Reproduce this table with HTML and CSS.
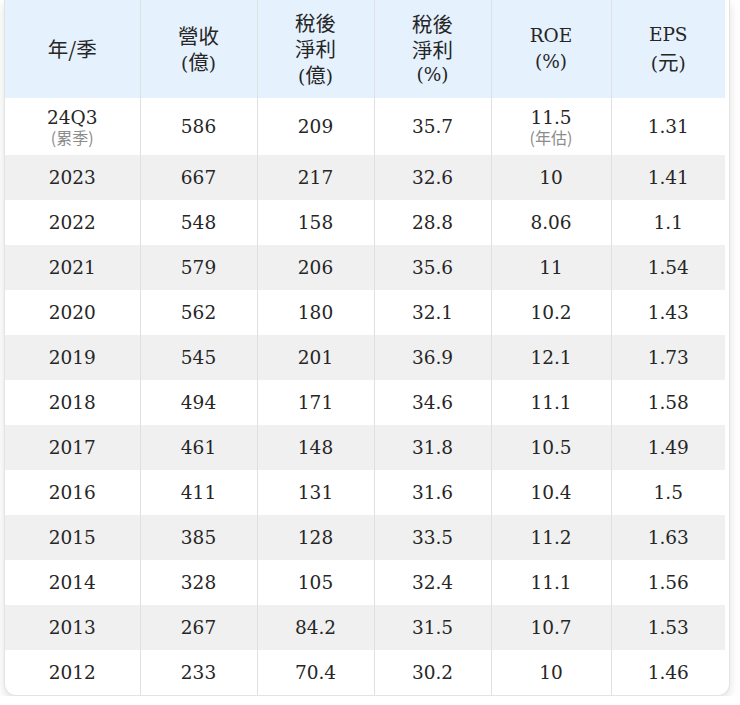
FILE: index.html
```html
<!DOCTYPE html>
<html lang="zh-Hant">
<head>
<meta charset="utf-8">
<title>歷年財務</title>
<link rel="stylesheet" href="styles.css">
</head>
<body>
<div class="card">
  <table class="fin">
    <colgroup>
      <col class="c-year"><col class="c-mid"><col class="c-mid"><col class="c-mid"><col class="c-roe"><col class="c-eps">
    </colgroup>
    <thead>
      <tr>
        <th><span class="zh">年/季</span></th>
        <th><div class="zh">營收</div><div>(<span class="zh">億</span>)</div></th>
        <th><div class="zh">稅後</div><div class="zh">淨利</div><div>(<span class="zh">億</span>)</div></th>
        <th><div class="zh">稅後</div><div class="zh">淨利</div><div>(%)</div></th>
        <th><div>ROE</div><div>(%)</div></th>
        <th><div>EPS</div><div>(<span class="zh">元</span>)</div></th>
      </tr>
    </thead>
    <tbody>
      <tr class="first">
        <td><div>24Q3</div><div class="note">(累季)</div></td>
        <td>586</td><td>209</td><td>35.7</td>
        <td><div>11.5</div><div class="note">(年估)</div></td>
        <td>1.31</td>
      </tr>
      <tr><td>2023</td><td>667</td><td>217</td><td>32.6</td><td>10</td><td>1.41</td></tr>
      <tr><td>2022</td><td>548</td><td>158</td><td>28.8</td><td>8.06</td><td>1.1</td></tr>
      <tr><td>2021</td><td>579</td><td>206</td><td>35.6</td><td>11</td><td>1.54</td></tr>
      <tr><td>2020</td><td>562</td><td>180</td><td>32.1</td><td>10.2</td><td>1.43</td></tr>
      <tr><td>2019</td><td>545</td><td>201</td><td>36.9</td><td>12.1</td><td>1.73</td></tr>
      <tr><td>2018</td><td>494</td><td>171</td><td>34.6</td><td>11.1</td><td>1.58</td></tr>
      <tr><td>2017</td><td>461</td><td>148</td><td>31.8</td><td>10.5</td><td>1.49</td></tr>
      <tr><td>2016</td><td>411</td><td>131</td><td>31.6</td><td>10.4</td><td>1.5</td></tr>
      <tr><td>2015</td><td>385</td><td>128</td><td>33.5</td><td>11.2</td><td>1.63</td></tr>
      <tr><td>2014</td><td>328</td><td>105</td><td>32.4</td><td>11.1</td><td>1.56</td></tr>
      <tr><td>2013</td><td>267</td><td>84.2</td><td>31.5</td><td>10.7</td><td>1.53</td></tr>
      <tr><td>2012</td><td>233</td><td>70.4</td><td>30.2</td><td>10</td><td>1.46</td></tr>
    </tbody>
  </table>
</div>
</body>
</html>
```

FILE: styles.css
```css
html, body {
  margin: 0;
  padding: 0;
  background: #ffffff;
}

body {
  padding: 0 0 0 4px;
}

.card {
  width: 726px;
  box-sizing: border-box;
  border: 1px solid #e3e3e3;
  border-top: none;
  border-radius: 0 0 12px 12px;
  padding-right: 4px;
  background: #ffffff;
  box-shadow: 0 4px 10px rgba(0, 0, 0, 0.12);
  overflow: hidden;
}

.fin {
  width: 720px;
  table-layout: fixed;
  border-collapse: collapse;
  font-family: "DejaVu Serif", "Noto Sans CJK TC", serif;
  font-size: 18.5px;
  color: #262626;
}

.c-year { width: 135px; }
.c-mid { width: 117px; }
.c-roe { width: 120px; }
.c-eps { width: 114px; }

.fin th,
.fin td {
  text-align: center;
  vertical-align: middle;
  padding: 0;
  border-left: 1px solid #dde1e6;
}

.fin th:first-child,
.fin td:first-child {
  border-left: none;
}

.fin th {
  background: #e5f1fd;
  font-weight: normal;
  height: 98px;
  line-height: 26px;
}

.zh {
  font-family: "Noto Sans CJK TC", sans-serif;
  font-size: 20.5px;
}

.fin td {
  height: 45px;
  line-height: 22px;
}

.fin tbody tr:nth-child(even) td {
  background: #f0f0f0;
}

.fin tr.first td {
  height: 57px;
}

.note {
  font-family: "Noto Sans CJK TC", sans-serif;
  font-size: 16px;
  line-height: 17px;
  color: #8c8c8c;
}
```
